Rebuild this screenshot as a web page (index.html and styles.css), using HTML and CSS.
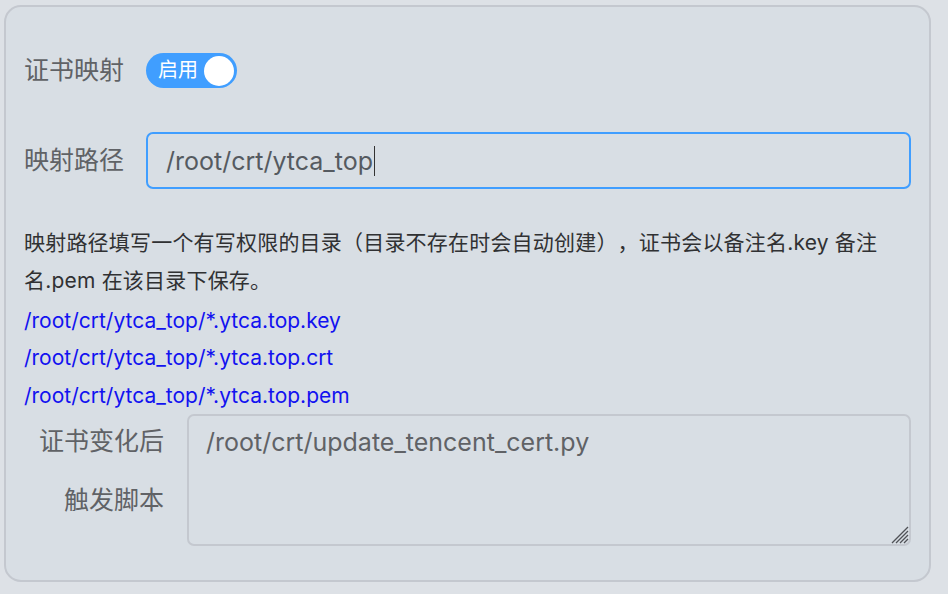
FILE: index.html
```html
<!DOCTYPE html>
<html lang="zh-CN">
<head>
<meta charset="utf-8">
<title>证书映射</title>
<link rel="stylesheet" href="styles.css">
</head>
<body>
<div class="panel">
  <div class="row row-switch">
    <span class="label">证书映射</span>
    <div class="switch">
      <span class="switch-text">启用</span>
      <span class="knob"></span>
    </div>
  </div>
  <div class="row row-input">
    <span class="label">映射路径</span>
    <div class="input"><span class="caret-text">/root/crt/ytca_top</span></div>
  </div>
  <div class="desc">
    <p class="note">映射路径填写一个有写权限的目录（目录不存在时会自动创建），证书会以备注名.key 备注<br>名.pem 在该目录下保存。</p>
    <div class="paths">
      <p class="path">/root/crt/ytca_top/*.ytca.top.key</p>
      <p class="path">/root/crt/ytca_top/*.ytca.top.crt</p>
      <p class="path">/root/crt/ytca_top/*.ytca.top.pem</p>
    </div>
  </div>
  <div class="row row-area">
    <span class="label label-wrap">证书变化后触发脚本</span>
    <div class="textarea">
      <span class="area-text">/root/crt/update_tencent_cert.py</span>
      <svg class="grip" width="18" height="18" viewBox="0 0 18 18">
        <path d="M1 17 L17 1 M5 17 L17 5 M9 17 L17 9 M13 17 L17 13" stroke="#505257" stroke-width="1.3" fill="none"/>
      </svg>
    </div>
  </div>
</div>
</body>
</html>
```
FILE: styles.css
```css
html, body {
  margin: 0;
  padding: 0;
}
body {
  width: 948px;
  height: 594px;
  background: #dde1e6;
  font-family: Inter, "Noto Sans CJK SC", sans-serif;
  overflow: hidden;
}
.panel {
  box-sizing: border-box;
  margin: 5px 0 0 4px;
  width: 927px;
  height: 577px;
  border: 2px solid #c4c8cf;
  border-radius: 17px;
  background: #d8dee4;
  padding: 46px 18px 0 18px;
}
.row {
  display: flex;
  align-items: center;
}
.label {
  font-size: 25px;
  color: #606266;
  width: 122px;
  line-height: 35px;
  white-space: nowrap;
}
.switch {
  position: relative;
  width: 91px;
  height: 35px;
  border-radius: 18px;
  background: #409eff;
  box-sizing: border-box;
}
.switch-text {
  position: absolute;
  left: 12px;
  top: 0;
  line-height: 35px;
  font-size: 20px;
  color: #fff;
}
.knob {
  position: absolute;
  right: 3px;
  top: 2.5px;
  width: 30px;
  height: 30px;
  border-radius: 50%;
  background: #fff;
}
.row-input {
  margin-top: 44px;
}
.input {
  box-sizing: border-box;
  width: 765px;
  height: 57px;
  border: 2px solid #409eff;
  border-radius: 7px;
  padding-left: 18px;
  display: flex;
  align-items: center;
  font-size: 25px;
  color: #555a60;
}
.caret-text {
  border-right: 1.5px solid #333;
  padding-right: 1px;
  line-height: 30px;
}
.desc {
  margin-top: 35px;
  font-size: 21px;
  line-height: 37.8px;
}
.desc p {
  margin: 0;
}
.note {
  color: #303133;
  text-spacing-trim: space-all;
  letter-spacing: 0.2px;
}
.paths {
  padding-top: 2px;
  margin-bottom: -2px;
}
.path {
  color: #1212f0;
}
.row-area {
  align-items: flex-start;
  margin-top: 1px;
}
.label-wrap {
  width: 140px;
  white-space: normal;
  text-align: right;
  line-height: 59px;
  margin-right: 23px;
  margin-top: -2px;
}
.textarea {
  position: relative;
  box-sizing: border-box;
  width: 724px;
  height: 132px;
  border: 2px solid #c4c8cf;
  border-radius: 7px;
  padding: 8px 17px;
  font-size: 25px;
  line-height: 37px;
  color: #606266;
}
.grip {
  position: absolute;
  right: 0;
  bottom: 0;
}
```
